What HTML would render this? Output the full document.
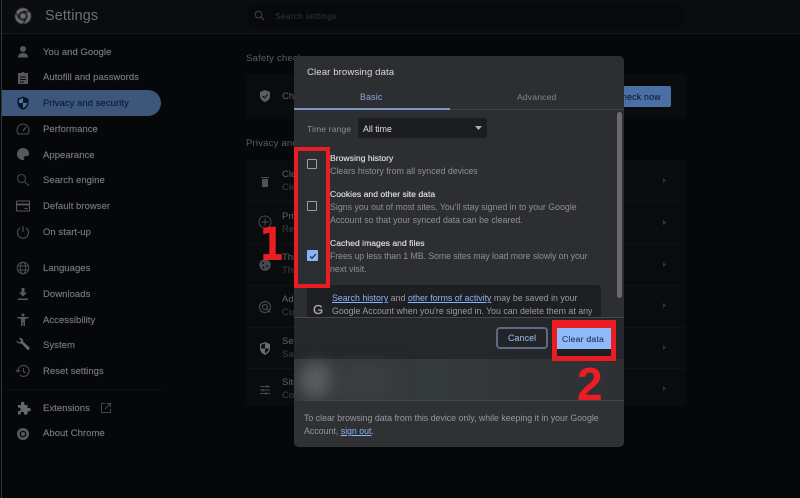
<!DOCTYPE html>
<html><head><meta charset="utf-8"><style>
html,body{margin:0;padding:0;background:#060709;}
#p{position:relative;width:800px;height:498px;overflow:hidden;background:#060709;font-family:"Liberation Sans",sans-serif;}
#p div,#p svg,#p span.a{position:absolute;}
.t{white-space:nowrap;line-height:12px;height:12px;}
.s{font-size:9.5px;letter-spacing:.04px;color:#77797c;font-weight:400;-webkit-text-stroke:.15px #77797c;left:43px;margin-top:1px;filter:blur(.35px);}
.ic{left:15px;width:16px;height:16px;fill:#56585b;filter:blur(.35px);}
.m{font-size:9.5px;color:#5e6063;filter:blur(.35px);}
.d{font-size:8.8px;color:#8e9093;filter:blur(.3px);}
.h{font-size:8.6px;letter-spacing:.02px;color:#e6e7e9;filter:blur(.3px);-webkit-text-stroke:.1px #e6e7e9;}
.c{width:8px;height:8px;border:1.5px solid #9a9c9f;left:307px;border-radius:1px;}
.l{color:#8ab4f8;text-decoration:underline;}
.r{background:#ea1c24;}
.sep{left:247px;width:438px;height:1px;background:#111214;}
</style></head><body><div id="p">
<div style="left:1px;top:0;width:1px;height:498px;background:#333436"></div>
<div style="left:2px;top:0;width:798px;height:33px;background:#0b0c0e;border-bottom:1px solid #17181a"></div>
<svg style="left:14px;top:7px;width:18px;height:18px;filter:blur(.4px)" viewBox="0 0 18 18"><circle cx="9" cy="9" r="8" fill="#6b6d70"/><circle cx="9" cy="9" r="4.600" fill="#0b0c0e"/><circle cx="9" cy="9" r="3" fill="#6b6d70"/><path d="M9 4.400h7M5 11.300L1.500 5.300M11.800 12.700l-3.500 5" stroke="#0b0c0e" stroke-width="1"/></svg>
<div class="t" style="left:45px;top:9px;font-size:14.3px;line-height:15px;height:15px;color:#6d6f72;letter-spacing:.2px;filter:blur(.35px)">Settings</div>
<div style="left:247px;top:4px;width:437px;height:25px;background:#08090b;border-radius:12px"></div>
<svg style="left:254px;top:10px;width:11px;height:11px;filter:blur(.3px)" viewBox="0 0 11 11"><circle cx="4.500" cy="4.500" r="3.300" fill="none" stroke="#3a3b3d" stroke-width="1.200"/><path d="M7 7l3.200 3.200" stroke="#3a3b3d" stroke-width="1.300"/></svg>
<div class="t" style="left:275px;top:10px;font-size:8.500px;color:#313335;letter-spacing:.2px;filter:blur(.3px)">Search settings</div>

<div style="left:2px;top:90px;width:159px;height:26px;background:#3d577c;border-radius:0 13px 13px 0"></div>

<svg class="ic" style="top:44px" viewBox="0 0 16 16"><circle cx="8" cy="5" r="3"/><path d="M3 13c0-3 3-4 5-4s5 1 5 4v.5H3z"/></svg>
<div class="t s" style="top:45.500px">You and Google</div>
<svg class="ic" style="top:70px" viewBox="0 0 16 16"><path d="M3 3h3.500a1.600 1.600 0 013 0H13v11H3z"/><path d="M5 7h6M5 9.500h6M5 12h4" stroke="#0a0a0c" stroke-width="1"/></svg>
<div class="t s" style="top:71px">Autofill and passwords</div>
<svg class="ic" style="top:95px;fill:#0b1526" viewBox="0 0 16 16"><path d="M8 1.500l5.500 2.200v4c0 3.300-2.400 6-5.500 7-3.100-1-5.500-3.700-5.500-7v-4z"/><path d="M8 3v5h4c-.2 2.300-1.800 4-4 5V8H4V4.800z" fill="#51729f"/></svg>
<div class="t s" style="top:97px;color:#101d36;-webkit-text-stroke:.15px #101d36">Privacy and security</div>
<svg class="ic" style="top:121px;fill:none;stroke:#4c4e51;stroke-width:1" viewBox="0 0 16 16"><path d="M3.500 13a6 6 0 119 0z"/><path d="M8 10l3-4" stroke-width="1.300"/></svg>
<div class="t s" style="top:122.500px">Performance</div>
<svg class="ic" style="top:146px" viewBox="0 0 16 16"><path d="M8 2a6 6 0 000 12c1.500 0 1.500-1 1-2-.4-1 .2-1.800 1.300-1.800H12a2.500 2.500 0 002-2.700C14 4 11.300 2 8 2z"/></svg>
<div class="t s" style="top:148.500px">Appearance</div>
<svg class="ic" style="top:172px;fill:none;stroke:#46484b;stroke-width:1.100" viewBox="0 0 16 16"><circle cx="6.500" cy="6.500" r="4"/><path d="M9.500 9.500l4.500 4.500"/></svg>
<div class="t s" style="top:174px">Search engine</div>
<svg class="ic" style="top:198px;fill:none;stroke:#56585b;stroke-width:1.100" viewBox="0 0 16 16"><rect x="1.500" y="3" width="13" height="10" rx="1"/><path d="M1.500 6.500h13" stroke-width="1.800"/><path d="M9.500 10.500h3"/></svg>
<div class="t s" style="top:200px">Default browser</div>
<svg class="ic" style="top:224px;fill:none;stroke:#4c4e51;stroke-width:1.100" viewBox="0 0 16 16"><path d="M8 2v6"/><path d="M5 4a5.500 5.500 0 106 0"/></svg>
<div class="t s" style="top:225.500px">On start-up</div>
<svg class="ic" style="top:260px;fill:none;stroke:#4c4e51;stroke-width:1" viewBox="0 0 16 16"><circle cx="8" cy="8" r="5.800"/><ellipse cx="8" cy="8" rx="2.700" ry="5.800"/><path d="M2.500 6h11M2.500 10h11"/></svg>
<div class="t s" style="top:262px">Languages</div>
<svg class="ic" style="top:286px" viewBox="0 0 16 16"><path d="M6.500 2h3v4.500H12L8 10.500 4 6.500h2.500zM3 12.500h10V14H3z"/></svg>
<div class="t s" style="top:287.500px">Downloads</div>
<svg class="ic" style="top:312px" viewBox="0 0 16 16"><circle cx="8" cy="3" r="1.500"/><path d="M2.500 5h11v1.300L10 7v7H8.600l-.3-4h-.6l-.3 4H6V7L2.500 6.300z"/></svg>
<div class="t s" style="top:313.500px">Accessibility</div>
<svg class="ic" style="top:337px;fill:#66686b" viewBox="0 0 16 16"><path d="M1.500 3.500l2.500 2 1.500-.5.500-1.500-2-2.500c2-.6 4.500 1 4 3.500l7 6.500-2 2.500-6.500-7C4 7 1 5.500 1.500 3.500z"/></svg>
<div class="t s" style="top:339px">System</div>
<svg class="ic" style="top:363px;fill:none;stroke:#4c4e51;stroke-width:1.100" viewBox="0 0 16 16"><path d="M3 8a5.500 5.500 0 111.800 4"/><path d="M1 7l2 2 2-2"/><path d="M8.500 5v3.500l2.200 1.300"/></svg>
<div class="t s" style="top:364.500px">Reset settings</div>
<div style="left:4px;top:389px;width:160px;height:1px;background:#0f1012"></div>
<svg class="ic" style="top:400px;fill:#66686b" viewBox="0 0 16 16"><path d="M3 5h3V3.500a1.700 1.700 0 013.400 0V5h3.100v3H14a1.700 1.700 0 010 3.400h-1.500V14.500H9v-1a1.700 1.700 0 00-3.400 0v1H3v-3.500h1a1.700 1.700 0 000-3.400H3z"/></svg>
<div class="t s" style="top:401.500px">Extensions</div>
<svg style="left:100px;top:402px;width:12px;height:12px;fill:none;stroke:#444649;stroke-width:1;filter:blur(.3px)" viewBox="0 0 12 12"><path d="M5 1.500H1.500v9h9V7M7 1.500h3.500V5M10.500 1.500L5 7"/></svg>
<svg class="ic" style="top:426px" viewBox="0 0 16 16"><circle cx="8" cy="8" r="6"/><circle cx="8" cy="8" r="3.300" fill="#060709"/><circle cx="8" cy="8" r="2" fill="#56585b"/></svg>
<div class="t s" style="top:427px">About Chrome</div>

<div class="t" style="left:246px;top:53px;font-size:9.500px;color:#5c5e62;letter-spacing:.2px;filter:blur(.35px)">Safety check</div>
<div class="t" style="left:246px;top:138px;font-size:9.500px;color:#5c5e62;letter-spacing:.2px;filter:blur(.35px)">Privacy and security</div>
<div style="left:246px;top:74px;width:440px;height:45px;background:#0a0b0d;border-radius:4px"></div>
<div style="left:246px;top:160px;width:440px;height:246px;background:#0a0b0d;border-radius:4px"></div>
<div class="sep" style="top:201px"></div><div class="sep" style="top:243px"></div><div class="sep" style="top:285px"></div><div class="sep" style="top:327px"></div><div class="sep" style="top:368px"></div>
<div style="left:620px;top:86px;width:51px;height:21px;background:#4a6fa5;border-radius:2px"></div>
<div class="t" style="left:622px;top:91px;font-size:8.800px;color:#0e1a30;letter-spacing:.2px;-webkit-text-stroke:.1px #0e1a30;filter:blur(.3px)">heck now</div>
<svg style="left:258px;top:89px;width:14px;height:14px;filter:blur(.3px)" viewBox="0 0 14 14"><path d="M7 1l5 2v4c0 3-2.200 5-5 6-2.800-1-5-3-5-6V3z" fill="#5c5e61"/><path d="M4.500 7l2 2 3-3.500" stroke="#0c0d0f" fill="none"/></svg>
<div class="t m" style="left:282px;top:90.500px">Check</div>
<div class="t m" style="left:282px;top:169px">Clear</div>
<div class="t m" style="left:282px;top:182px;color:#3d3f42">Clear</div>
<svg style="left:258px;top:174px;width:14px;height:14px;filter:blur(.3px)" viewBox="0 0 14 14" fill="#4f5154"><path d="M3 3h8v1H3zM4 5h6v8H4z"/></svg>
<div class="t m" style="left:282px;top:211px">Priv</div>
<div class="t m" style="left:282px;top:224px;color:#3d3f42">Rev</div>
<svg style="left:258px;top:215px;width:14px;height:14px;fill:none;stroke:#46484b;filter:blur(.3px)" viewBox="0 0 14 14"><circle cx="7" cy="7" r="6"/><path d="M7 3.500v7M3.500 7h7"/></svg>
<div class="t m" style="left:282px;top:252px">Thi</div>
<div class="t m" style="left:282px;top:265px;color:#3d3f42">Thi</div>
<svg style="left:258px;top:258px;width:14px;height:14px;filter:blur(.3px)" viewBox="0 0 14 14"><circle cx="7" cy="7" r="5.800" fill="#46484b"/><circle cx="5" cy="5" r="1" fill="#0c0d0f"/><circle cx="9" cy="8" r="1" fill="#0c0d0f"/><circle cx="5.500" cy="9.500" r="1" fill="#0c0d0f"/></svg>
<div class="t m" style="left:282px;top:294px">Ads</div>
<div class="t m" style="left:282px;top:307px;color:#3d3f42">Cus</div>
<svg style="left:258px;top:300px;width:14px;height:14px;fill:none;stroke:#46484b;stroke-width:1.200;filter:blur(.3px)" viewBox="0 0 14 14"><circle cx="7" cy="7" r="5.500"/><circle cx="7" cy="7" r="2.500"/><path d="M8 8l4.500 4.500"/></svg>
<div class="t m" style="left:282px;top:336px">Sec</div>
<div class="t m" style="left:282px;top:349px;color:#3d3f42">Saf</div>
<svg style="left:258px;top:341px;width:14px;height:15px;filter:blur(.3px)" viewBox="0 0 14 15"><path d="M7 1l5 2v4.500c0 3-2.200 5-5 6.500-2.800-1.500-5-3.500-5-6.500V3z" fill="#6a6c6f"/><path d="M7 2.500v5h3.800c-.2 2.200-1.800 3.800-3.800 4.800v-4.800H3.200V3.800z" fill="#0c0d0f"/></svg>
<div class="t m" style="left:282px;top:377px">Site</div>
<div class="t m" style="left:282px;top:390px;color:#3d3f42">Con</div>
<svg style="left:258px;top:383px;width:14px;height:14px;stroke:#46484b;fill:none;filter:blur(.3px)" viewBox="0 0 14 14"><path d="M2 3.500h10M2 7h10M2 10.500h10M9 2v3M5 5.500v3M8 9v3"/></svg>
<svg style="left:663px;top:178px;width:3px;height:5px" viewBox="0 0 3 5"><path d="M0 0l3 2.500L0 5z" fill="#333538"/></svg>
<svg style="left:663px;top:220px;width:3px;height:5px" viewBox="0 0 3 5"><path d="M0 0l3 2.500L0 5z" fill="#3a3c3f"/></svg>
<svg style="left:663px;top:262px;width:3px;height:5px" viewBox="0 0 3 5"><path d="M0 0l3 2.500L0 5z" fill="#333538"/></svg>
<svg style="left:663px;top:303px;width:3px;height:5px" viewBox="0 0 3 5"><path d="M0 0l3 2.500L0 5z" fill="#333538"/></svg>
<svg style="left:663px;top:345px;width:3px;height:5px" viewBox="0 0 3 5"><path d="M0 0l3 2.500L0 5z" fill="#333538"/></svg>
<svg style="left:663px;top:386px;width:3px;height:5px" viewBox="0 0 3 5"><path d="M0 0l3 2.500L0 5z" fill="#333538"/></svg>

<!-- dialog -->
<div style="left:294px;top:56px;width:330px;height:391px;background:#2d2e31;border-radius:5px;overflow:hidden">
  <div style="left:0;top:261px;width:330px;height:42px;background:#25272a"></div>
  <div style="left:0;top:303px;width:330px;height:42px;background:linear-gradient(90deg,#34393b 0%,#34393b 45%,#2e3033 100%)"></div>
  <div style="left:6px;top:306px;width:34px;height:36px;border-radius:50%;background:#585e5d;filter:blur(7px)"></div>
  <div style="left:40px;top:310px;width:60px;height:30px;background:#3a3f40;filter:blur(9px)"></div>
  <div style="left:0;top:345px;width:330px;height:46px;background:#2f3134"></div>
</div>
<div class="t" style="left:307px;top:67px;font-size:9.600px;color:#dadbdd;letter-spacing:.1px;filter:blur(.3px)">Clear browsing data</div>
<div class="t" style="left:360px;top:91px;font-size:8.800px;color:#7f9bc9;letter-spacing:.2px;-webkit-text-stroke:.1px #7f9bc9;filter:blur(.3px)">Basic</div>
<div class="t" style="left:517px;top:91px;font-size:8.600px;color:#85878a;letter-spacing:.15px;filter:blur(.3px)">Advanced</div>
<div style="left:294px;top:109px;width:330px;height:1px;background:#404144"></div>
<div style="left:294px;top:108px;width:156px;height:2px;background:#7b96c2"></div>
<div style="left:617px;top:112px;width:5px;height:186px;background:#6a6a6c;border-radius:3px"></div>

<div class="t" style="left:307px;top:123px;font-size:8.600px;color:#8b8d90;letter-spacing:.1px;filter:blur(.3px)">Time range</div>
<div style="left:358px;top:118px;width:129px;height:20px;background:#1c1d20;border-radius:2px"></div>
<div class="t" style="left:363px;top:123px;font-size:8.800px;color:#dfe0e2;filter:blur(.3px)">All time</div>
<svg style="left:475px;top:126px;width:7px;height:4px" viewBox="0 0 7 4"><path d="M0 0h7L3.500 4z" fill="#aeb0b3"/></svg>

<div class="c" style="top:159px"></div>
<div class="c" style="top:201px"></div>
<div style="left:307px;top:250px;width:11px;height:11px;background:#8ab4f8;border-radius:1px"></div>
<svg style="left:308px;top:251px;width:10px;height:10px" viewBox="0 0 10 10"><path d="M2 5.300l2 2 4-4.300" fill="none" stroke="#1d2a48" stroke-width="1.200"/></svg>

<div class="t h" style="left:330px;top:152px">Browsing history</div>
<div class="t d" style="left:330px;top:165px">Clears history from all synced devices</div>
<div class="t h" style="left:330px;top:188px">Cookies and other site data</div>
<div class="t d" style="left:330px;top:201px">Signs you out of most sites. You'll stay signed in to your Google</div>
<div class="t d" style="left:330px;top:214px">Account so that your synced data can be cleared.</div>
<div class="t h" style="left:330px;top:237px">Cached images and files</div>
<div class="t d" style="left:330px;top:250px;letter-spacing:-.08px">Frees up less than 1 MB. Some sites may load more slowly on your</div>
<div style="overflow:hidden;left:330px;top:263px;width:280px;height:12px"><div class="t d" style="left:0;top:0">next visit.</div></div>

<div style="left:307px;top:285px;width:294px;height:32px;background:#1e1f22;border-radius:3px 3px 0 0"></div>
<div class="t d" style="left:332px;top:292px;color:#9a9c9f"><span class="l">Search history</span> and <span class="l">other forms of activity</span> may be saved in your</div>
<div class="t d" style="left:332px;top:305px;color:#9a9c9f">Google Account when you're signed in. You can delete them at any</div>
<div class="t" style="left:313px;top:303px;font-size:13px;line-height:14px;height:14px;color:#a9abae;-webkit-text-stroke:.3px #a9abae;filter:blur(.3px)">G</div>
<div style="left:294px;top:317px;width:330px;height:1px;background:#46474a"></div>

<div style="left:496px;top:327px;width:48px;height:18px;border:2px solid #5b6b82;border-radius:4px;background:#232427"></div>
<div class="t" style="left:508px;top:332px;font-size:8.800px;color:#93b2e4;letter-spacing:.15px;-webkit-text-stroke:.1px #93b2e4;filter:blur(.3px)">Cancel</div>
<div style="left:552px;top:320px;width:64px;height:41px;background:#ea1c24"></div>
<div style="left:557px;top:325px;width:54px;height:31px;background:#1d1f22"></div>
<div style="left:557px;top:328px;width:54px;height:21px;background:#8fbafa"></div>
<div style="left:557px;top:320px;width:54px;height:8px;background:#ea1c24"></div>
<div style="left:557px;top:356px;width:54px;height:5px;background:#ea1c24"></div>
<div class="t" style="left:562px;top:333px;font-size:8.700px;color:#1e3158;letter-spacing:.2px;-webkit-text-stroke:.1px #1e3158;filter:blur(.25px)">Clear data</div>

<div style="left:304px;top:400px;width:320px;height:1px;background:#45474a"></div>
<div class="t d" style="left:304px;top:412px;color:#96989b">To clear browsing data from this device only, while keeping it in your Google</div>
<div class="t d" style="left:304px;top:425px;color:#96989b">Account, <span class="l">sign out</span>.</div>

<!-- annotations -->
<div class="r" style="left:294px;top:147px;width:36px;height:4px"></div>
<div class="r" style="left:294px;top:284px;width:36px;height:4px"></div>
<div class="r" style="left:294px;top:147px;width:4px;height:141px"></div>
<div class="r" style="left:326px;top:147px;width:4px;height:141px"></div>
<div class="t" style="left:256px;top:221px;font-family:'DejaVu Sans',sans-serif;font-size:45px;line-height:47px;height:47px;font-weight:700;color:#ea1c24;transform:scaleX(.8);transform-origin:center">1</div>
<div class="t" style="left:577px;top:361px;font-size:46px;line-height:47px;height:47px;font-weight:700;color:#ea1c24">2</div>
</div></body></html>
